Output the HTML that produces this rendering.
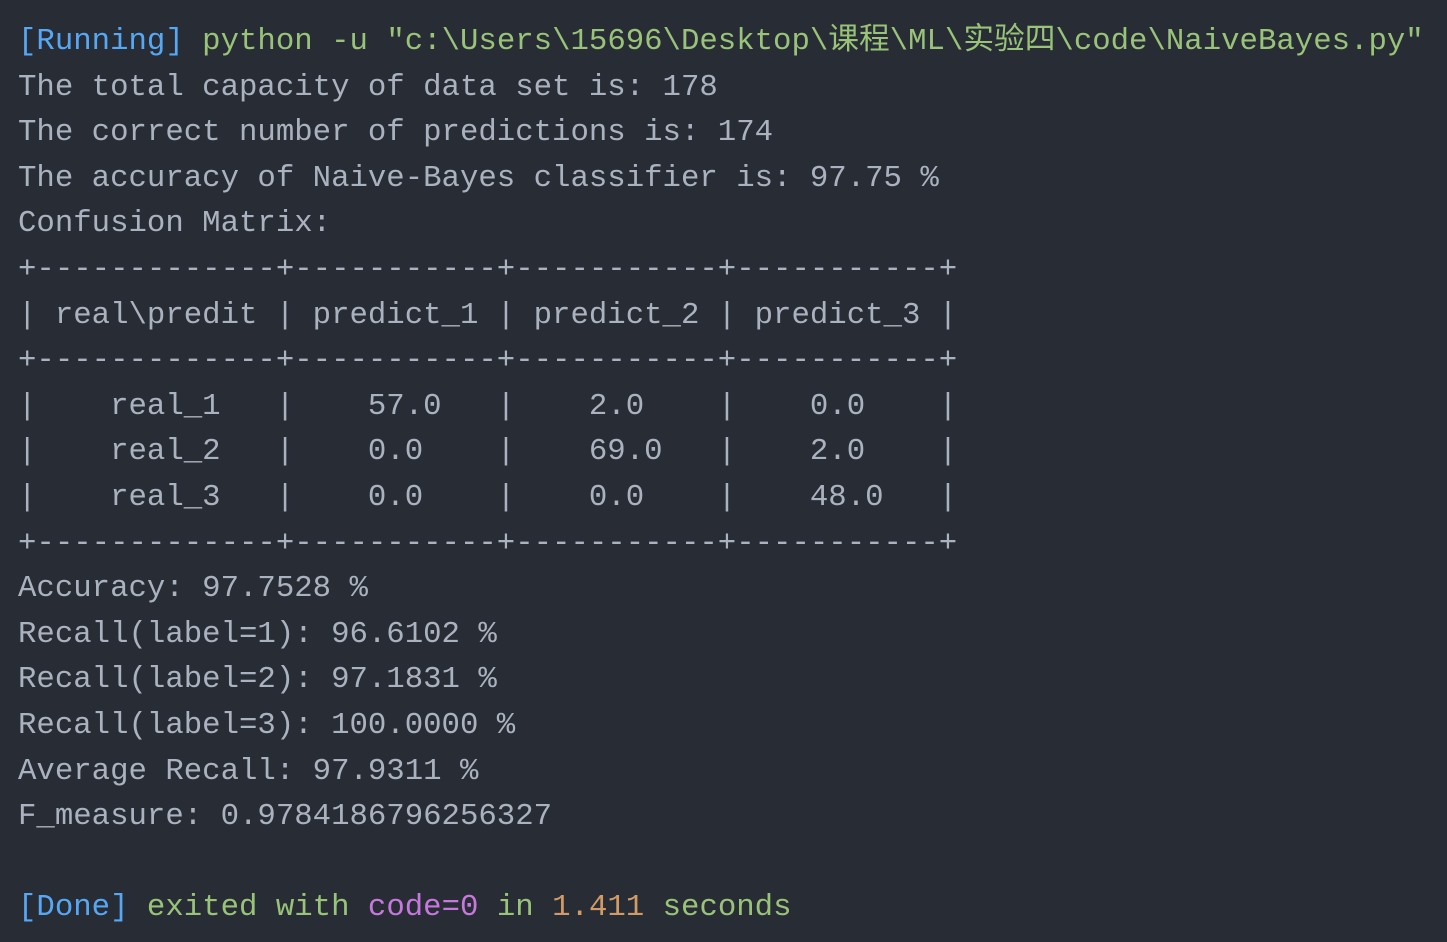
<!DOCTYPE html>
<html><head><meta charset="utf-8"><style>
html,body{margin:0;padding:0;background:#282c34;width:1447px;height:942px;overflow:hidden}
pre{margin:0;padding:19px 0 0 18px;font-family:"Liberation Mono","Noto Sans CJK SC",monospace;font-size:30.7px;line-height:45.6px;color:#abb2bf;white-space:pre}
.b{color:#56a8f5}.g{color:#98c379}.m{color:#c678dd}.o{color:#d19a66}
</style></head><body><pre><span class="b">[Running]</span> <span class="g">python -u "c:\Users\15696\Desktop\课程\ML\实验四\code\NaiveBayes.py"</span>
The total capacity of data set is: 178
The correct number of predictions is: 174
The accuracy of Naive-Bayes classifier is: 97.75 %
Confusion Matrix:
+-------------+-----------+-----------+-----------+
| real\predit | predict_1 | predict_2 | predict_3 |
+-------------+-----------+-----------+-----------+
|    real_1   |    57.0   |    2.0    |    0.0    |
|    real_2   |    0.0    |    69.0   |    2.0    |
|    real_3   |    0.0    |    0.0    |    48.0   |
+-------------+-----------+-----------+-----------+
Accuracy: 97.7528 %
Recall(label=1): 96.6102 %
Recall(label=2): 97.1831 %
Recall(label=3): 100.0000 %
Average Recall: 97.9311 %
F_measure: 0.9784186796256327

<span class="b">[Done]</span> <span class="g">exited with</span> <span class="m">code=0</span> <span class="g">in</span> <span class="o">1.411</span> <span class="g">seconds</span></pre></body></html>
